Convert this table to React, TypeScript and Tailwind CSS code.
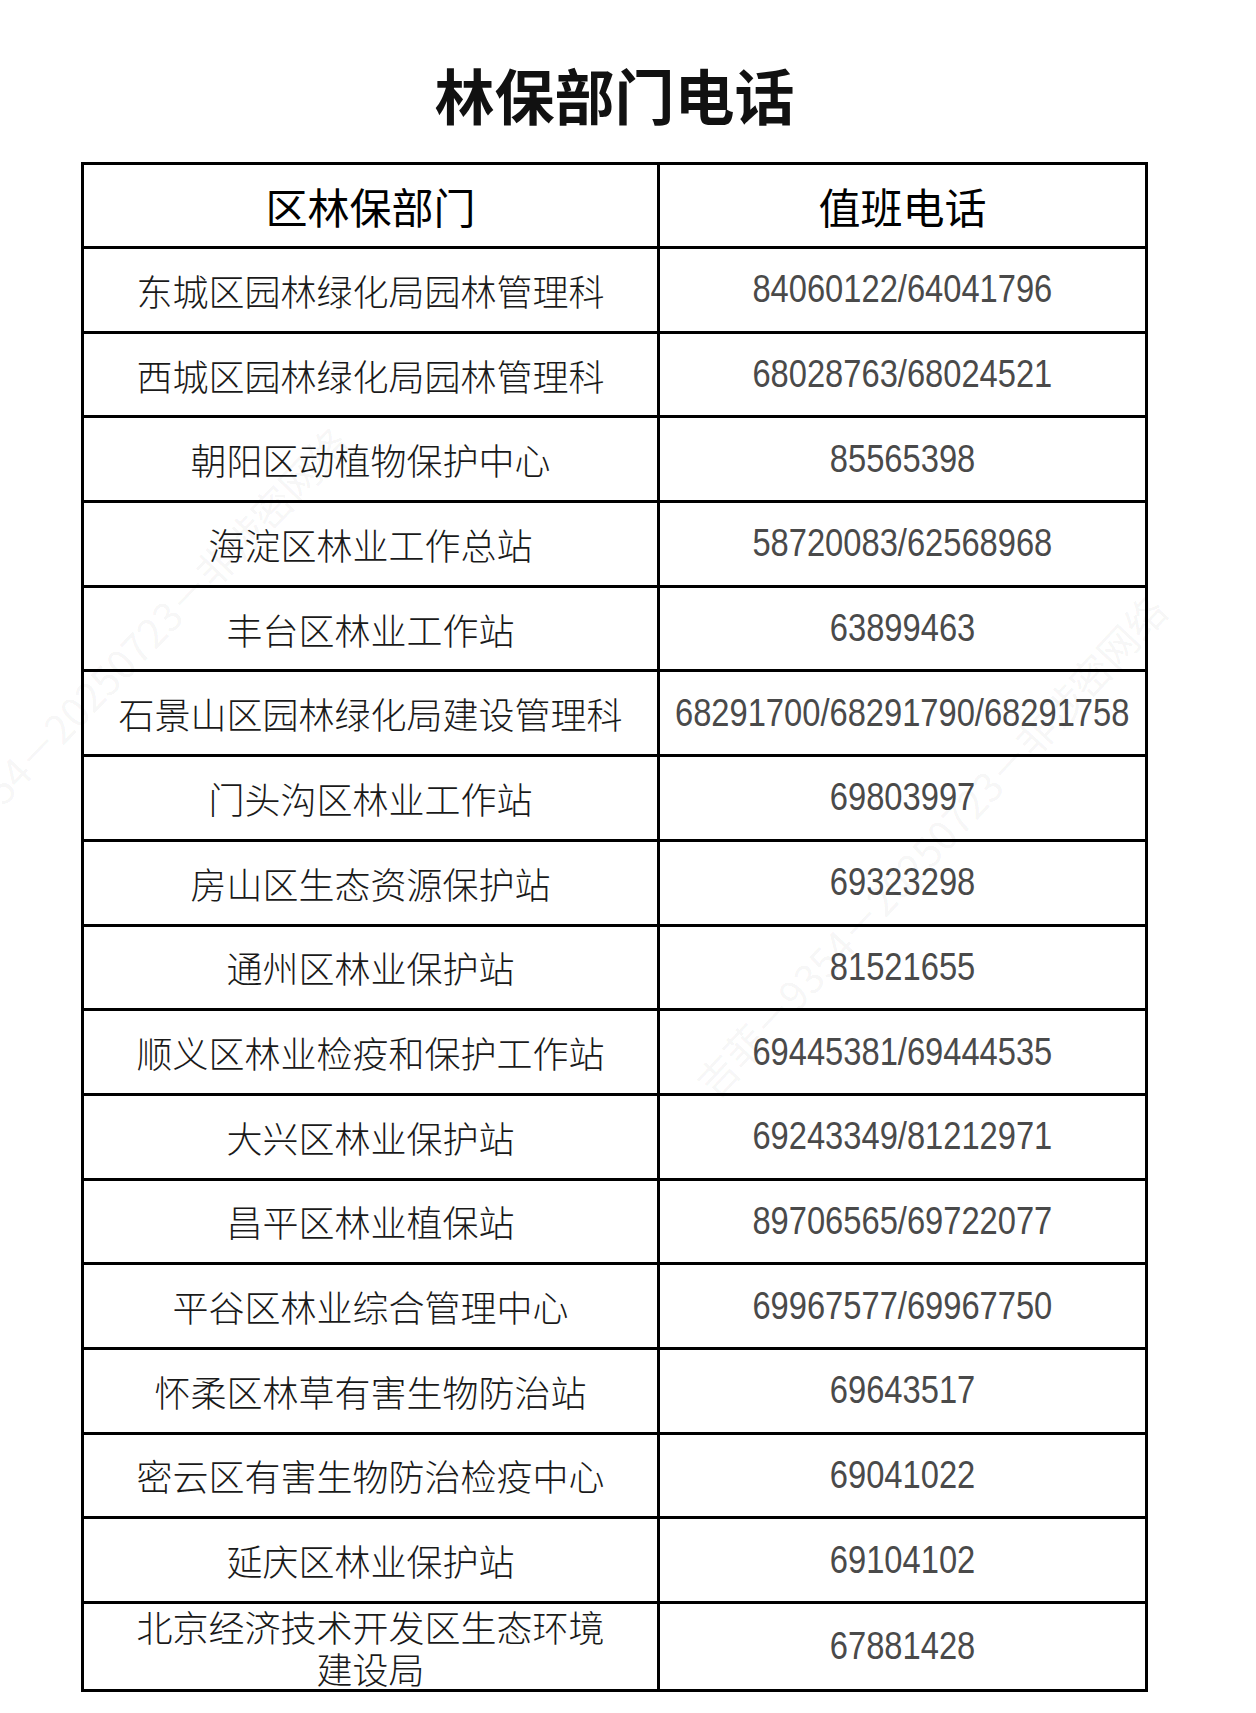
import type { ReactNode } from "react";

const rows: [ReactNode, string][] = [
  ["东城区园林绿化局园林管理科", "84060122/64041796"],
  ["西城区园林绿化局园林管理科", "68028763/68024521"],
  ["朝阳区动植物保护中心", "85565398"],
  ["海淀区林业工作总站", "58720083/62568968"],
  ["丰台区林业工作站", "63899463"],
  ["石景山区园林绿化局建设管理科", "68291700/68291790/68291758"],
  ["门头沟区林业工作站", "69803997"],
  ["房山区生态资源保护站", "69323298"],
  ["通州区林业保护站", "81521655"],
  ["顺义区林业检疫和保护工作站", "69445381/69444535"],
  ["大兴区林业保护站", "69243349/81212971"],
  ["昌平区林业植保站", "89706565/69722077"],
  ["平谷区林业综合管理中心", "69967577/69967750"],
  ["怀柔区林草有害生物防治站", "69643517"],
  ["密云区有害生物防治检疫中心", "69041022"],
  ["延庆区林业保护站", "69104102"],
];

const cjk = { fontFamily: "'Noto Sans CJK SC', 'Noto Sans', sans-serif" };
const digits = { fontFamily: "'Liberation Sans', Arial, sans-serif" };

const mark = "吉菲－9354－20250723－非涉密网络";

function Phone({ value }: { value: string }) {
  // the source uses a narrow face, squeeze the regular one to match
  return (
    <span className="inline-block scale-x-[0.86] whitespace-nowrap text-[38px] font-light text-[#4a4a4a]" style={digits}>
      {value}
    </span>
  );
}

export default function App() {
  return (
    <div className="relative min-h-[1713px] w-[1256px] overflow-hidden bg-white pt-[64px]" style={cjk}>
      <div className="ml-[81px] w-[1067px]">
        <h1 className="text-center text-[60px] font-bold leading-[60px] text-[#111]">林保部门电话</h1>

        <div className="mt-[38px] grid grid-cols-[576px_488px] border-l-[3px] border-t-[3px] border-black">
          <div className="flex h-[84px] items-center justify-center border-b-[3px] border-r-[3px] border-black text-[42px] font-normal text-black">
            区林保部门
          </div>
          <div className="flex h-[84px] items-center justify-center border-b-[3px] border-r-[3px] border-black text-[42px] font-normal text-black">
            值班电话
          </div>

          {rows.map(([name, phone], i) => (
            <div key={i} className="contents">
              <div className="flex h-[84.7px] items-center justify-center border-b-[3px] border-r-[3px] border-black text-[36px] font-light text-[#1a1a1a]">
                {name}
              </div>
              <div className="flex h-[84.7px] items-center justify-center border-b-[3px] border-r-[3px] border-black">
                <Phone value={phone} />
              </div>
            </div>
          ))}

          <div className="flex h-[88px] items-center justify-center border-b-[3px] border-r-[3px] border-black text-center text-[36px] font-light leading-[42px] text-[#1a1a1a]">
            <span>
              北京经济技术开发区生态环境
              <br />
              建设局
            </span>
          </div>
          <div className="flex h-[88px] items-center justify-center border-b-[3px] border-r-[3px] border-black">
            <Phone value="67881428" />
          </div>
        </div>
      </div>

      {/* faint watermark */}
      <div className="pointer-events-none absolute inset-0 text-[40px] text-black/[0.05]" aria-hidden="true">
        <div className="absolute left-[-260px] top-[560px] w-[900px] -rotate-[46deg] whitespace-nowrap">{mark}</div>
        <div className="absolute left-[560px] top-[730px] w-[900px] -rotate-[47deg] whitespace-nowrap">{mark}</div>
        <div className="absolute left-[980px] top-[1540px] w-[900px] -rotate-[47deg] whitespace-nowrap">{mark}</div>
      </div>
    </div>
  );
}
